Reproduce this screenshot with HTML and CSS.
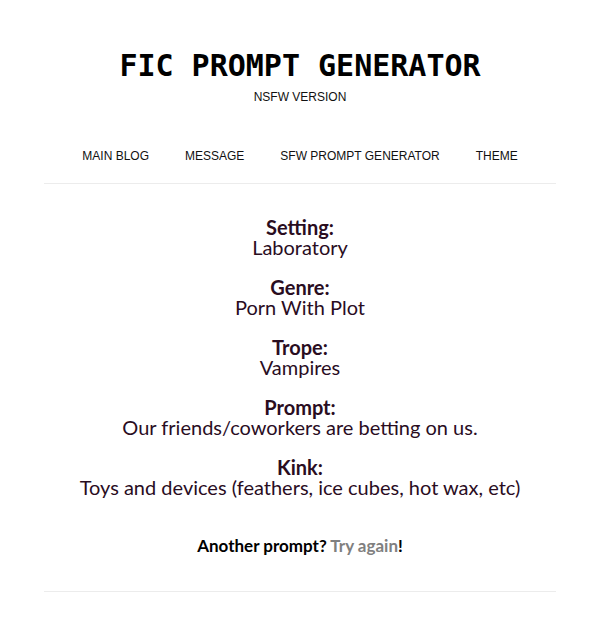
FILE: index.html
```html
<!DOCTYPE html>
<html>
<head>
    <title>Fic Prompt Generator</title>
    <meta name="viewport" content="width=device-width, initial-scale=1.0">
    <link rel="stylesheet" href="styles.css">
</head>
<body>
    <div class="wrap">
        <!-- Header -->
        <header class="header">
            <h1>FIC PROMPT GENERATOR</h1>
            <div class="subtitle">NSFW VERSION</div>
        </header>

        <nav class="nav">
            <a href="#">MAIN BLOG</a>
            <a href="#">MESSAGE</a>
            <a href="#">SFW PROMPT GENERATOR</a>
            <a href="#">THEME</a>
        </nav>

        <!-- Prompt -->
        <div class="prompt">
            <div class="item">
                <b>Setting:</b>
                <span>Laboratory</span>
            </div>
            <div class="item">
                <b>Genre:</b>
                <span>Porn With Plot</span>
            </div>
            <div class="item">
                <b>Trope:</b>
                <span>Vampires</span>
            </div>
            <div class="item">
                <b>Prompt:</b>
                <span>Our friends/coworkers are betting on us.</span>
            </div>
            <div class="item">
                <b>Kink:</b>
                <span>Toys and devices (feathers, ice cubes, hot wax, etc)</span>
            </div>

            <p class="again">Another prompt? <a href="#">Try again</a>!</p>
        </div>
    </div>
</body>
</html>
```

FILE: styles.css
```css
body {
    margin: 0;
    background: #fff;
    font-family: 'Liberation Sans', Arial, sans-serif;
}

a {
    text-decoration: none;
}

.wrap {
    width: 512px;
    margin: 0 auto;
}

/* Header */
.header {
    text-align: center;
    padding-top: 47px;
}

.header h1 {
    font-family: 'DejaVu Sans Mono', monospace;
    font-size: 30px;
    font-weight: bold;
    color: #000;
    margin: 0;
    line-height: 38px;
}

.subtitle {
    font-size: 12px;
    color: #111;
    margin-top: 4px;
    line-height: 16px;
}

/* Nav */
.nav {
    display: flex;
    justify-content: center;
    padding: 43px 0 19px;
    border-bottom: 1px solid #ececec;
}

.nav a {
    font-size: 12px;
    color: #111;
    padding: 0 18px;
    line-height: 16px;
}

/* Prompt */
.prompt {
    text-align: center;
    font-family: Lato, 'Open Sans', sans-serif;
    font-size: 20px;
    color: #2a0d1f;
    padding: 33px 0 35px;
    border-bottom: 1px solid #ececec;
}

.item {
    display: flex;
    flex-direction: column;
    line-height: 20px;
    margin-bottom: 20px;
}

.item b {
    font-weight: bold;
}

.again {
    font-size: 17px;
    font-weight: bold;
    color: #000;
    margin: 39px 0 0;
    line-height: 20px;
}

.again a {
    color: #808080;
}
```
